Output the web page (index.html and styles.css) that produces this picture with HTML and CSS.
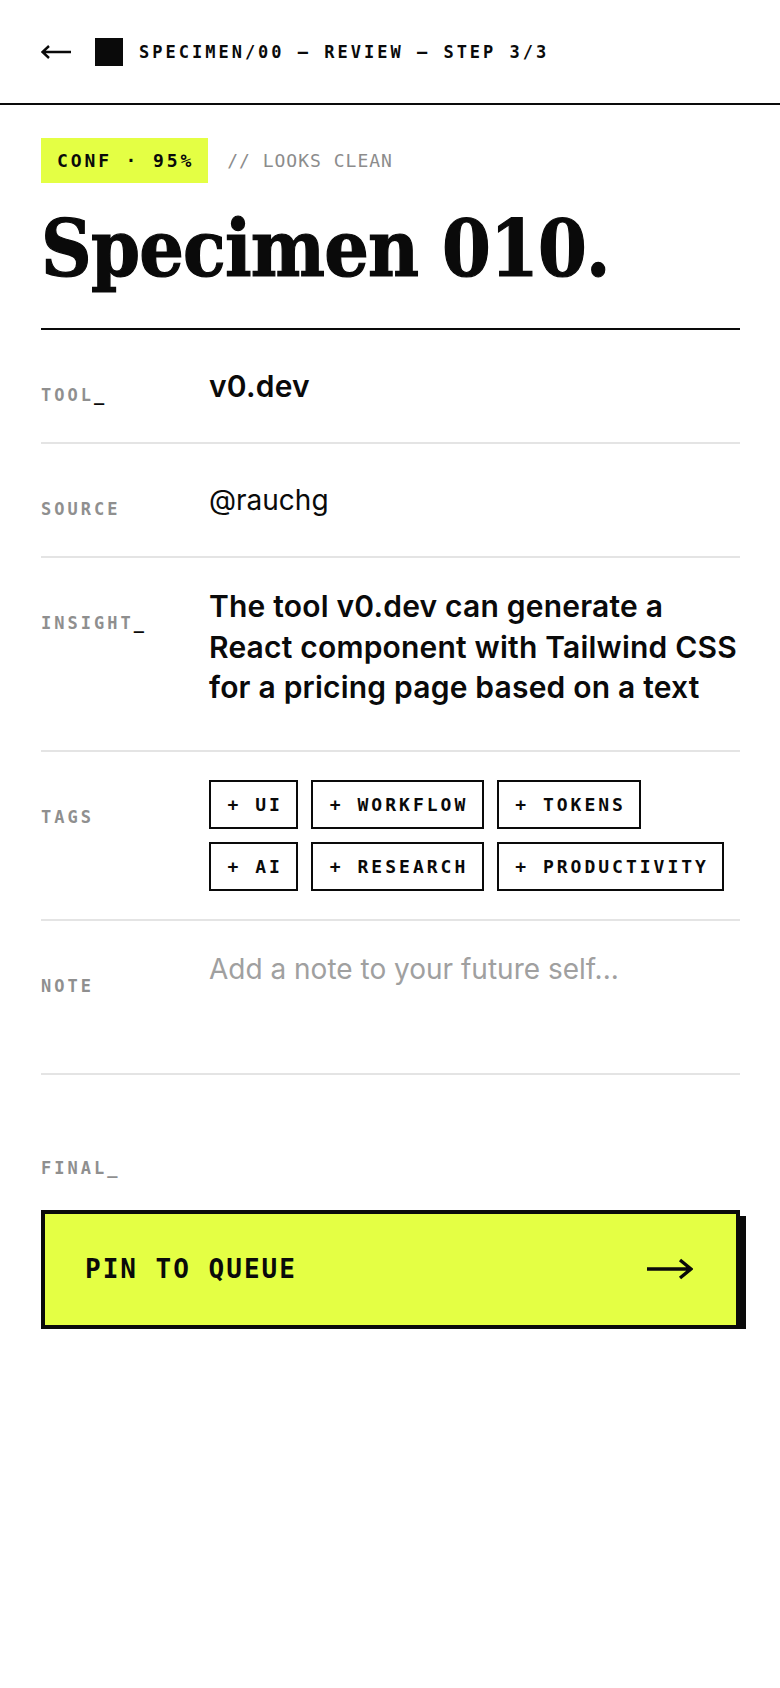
FILE: index.html
```html
<!DOCTYPE html>
<html lang="en">
<head>
    <meta charset="UTF-8">
    <meta name="viewport" content="width=device-width, initial-scale=1.0">
    <title>Specimen 010 - Review</title>
    <link rel="stylesheet" href="styles.css">
</head>
<body>
    <header class="topbar">
        <a class="back" href="#" aria-label="Back">
            <svg width="30" height="14" viewBox="0 0 30 14">
                <path d="M1 7H30M8 1L1.5 7L8 13" fill="none" stroke="#0a0a0a" stroke-width="2.4"/>
            </svg>
        </a>
        <span class="mark"></span>
        <span class="crumb">SPECIMEN/00 — REVIEW — STEP 3/3</span>
    </header>

    <main class="review">
        <div class="meta">
            <span class="conf">CONF · 95%</span>
            <span class="verdict">// LOOKS CLEAN</span>
        </div>

        <h1 class="title">Specimen 010.</h1>

        <dl class="fields">
            <div class="field">
                <dt class="label">TOOL<span class="cursor">_</span></dt>
                <dd class="value tool">v0.dev</dd>
            </div>
            <div class="field">
                <dt class="label">SOURCE</dt>
                <dd class="value">@rauchg</dd>
            </div>
            <div class="field">
                <dt class="label">INSIGHT<span class="cursor">_</span></dt>
                <dd class="value insight">The tool v0.dev can generate a React component with Tailwind CSS for a pricing page based on a text</dd>
            </div>
            <div class="field">
                <dt class="label">TAGS</dt>
                <dd class="value tags">
                    <button class="tag">+ UI</button>
                    <button class="tag">+ WORKFLOW</button>
                    <button class="tag">+ TOKENS</button>
                    <button class="tag">+ AI</button>
                    <button class="tag">+ RESEARCH</button>
                    <button class="tag">+ PRODUCTIVITY</button>
                </dd>
            </div>
            <div class="field">
                <dt class="label">NOTE</dt>
                <dd class="value">
                    <textarea class="note" placeholder="Add a note to your future self..."></textarea>
                </dd>
            </div>
        </dl>

        <section class="final">
            <div class="label">FINAL_</div>
            <button class="btn-pin">
                <span>PIN TO QUEUE</span>
                <svg width="46" height="22" viewBox="0 0 46 22">
                    <path d="M0 11H44M33 2L44 11L33 20" fill="none" stroke="#0a0a0a" stroke-width="3.4"/>
                </svg>
            </button>
        </section>
    </main>
</body>
</html>
```

FILE: styles.css
```css
html, body {
    background: #ffffff;
    margin: 0;
    padding: 0;
    color: #0a0a0a;
    font-family: Inter, "Noto Sans", sans-serif;
}

.topbar {
    height: 103px;
    display: flex;
    align-items: center;
    padding-left: 41px;
    border-bottom: 2px solid #0a0a0a;
}

.back {
    display: flex;
    margin-right: 24px;
}

.mark {
    width: 28px;
    height: 28px;
    background: #0a0a0a;
    margin-right: 16px;
}

.crumb {
    font-family: "DejaVu Sans Mono", monospace;
    font-weight: bold;
    font-size: 17px;
    letter-spacing: 3px;
}

.review {
    padding: 0 40px 0 41px;
}

.meta {
    margin-top: 33px;
    display: flex;
    align-items: center;
    gap: 19px;
    font-family: "DejaVu Sans Mono", monospace;
    font-size: 18px;
}

.conf {
    height: 45px;
    display: flex;
    align-items: center;
    padding: 0 14px 0 16px;
    background: #e4ff44;
    font-weight: bold;
    letter-spacing: 0.16em;
}

.verdict {
    color: #8c8c8c;
    letter-spacing: 1px;
}

.title {
    margin: 27px 0 0;
    padding-bottom: 40px;
    border-bottom: 2px solid #0a0a0a;
    font-family: "DejaVu Serif Condensed", "DejaVu Serif", serif;
    font-stretch: condensed;
    font-weight: 900;
    font-size: 78px;
    line-height: 78px;
    letter-spacing: -0.8px;
    -webkit-text-stroke: 1.2px #0a0a0a;
}

.fields {
    margin: 0;
}

.field {
    display: grid;
    grid-template-columns: 168px 1fr;
    padding: 28px 0;
    border-bottom: 2px solid #e4e4e4;
}

.label {
    margin-top: 27px;
    font-family: "DejaVu Sans Mono", monospace;
    font-weight: bold;
    font-size: 17px;
    line-height: 20px;
    letter-spacing: 3px;
    color: #8f8f8f;
}

.cursor {
    color: #0a0a0a;
}

.value {
    margin: 0;
    font-size: 28px;
    line-height: 56px;
}

.tool {
    font-size: 30px;
    font-weight: 600;
    letter-spacing: 0.2px;
}

.insight {
    font-size: 30px;
    font-weight: 600;
    letter-spacing: 0.2px;
    line-height: 40.6px;
    margin-bottom: 14px;
}

.tags {
    display: flex;
    flex-wrap: wrap;
    gap: 13px;
    line-height: normal;
}

.tag {
    height: 49px;
    padding: 0 13.5px 0 16.5px;
    border: 2px solid #0a0a0a;
    background: #ffffff;
    color: #0a0a0a;
    font-family: "DejaVu Sans Mono", monospace;
    font-weight: bold;
    font-size: 18px;
    letter-spacing: 3px;
    cursor: pointer;
}

.note {
    display: block;
    width: 100%;
    height: 96px;
    padding: 0;
    border: none;
    outline: none;
    resize: none;
    font-family: Inter, sans-serif;
    font-size: 28px;
    line-height: 40.6px;
    color: #0a0a0a;
}

.note::placeholder {
    color: #a0a0a0;
}

.final {
    padding-top: 83px;
}

.final .label {
    margin: 0;
}

.btn-pin {
    margin-top: 32px;
    width: 100%;
    height: 119px;
    display: flex;
    align-items: center;
    justify-content: space-between;
    padding: 0 43px 0 40px;
    border: 4px solid #0a0a0a;
    background: #e4ff44;
    box-shadow: 6px 6px 0 #0a0a0a;
    color: #0a0a0a;
    font-family: "DejaVu Sans Mono", monospace;
    font-weight: bold;
    font-size: 26px;
    letter-spacing: 2px;
    cursor: pointer;
}
```
